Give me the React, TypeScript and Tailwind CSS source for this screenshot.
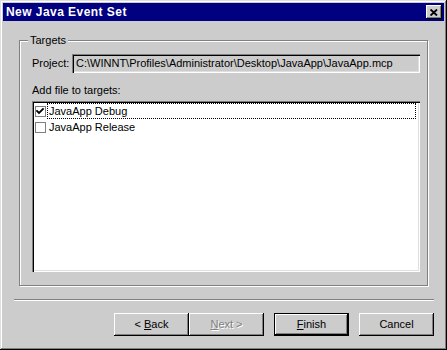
import React from "react";

const raised =
  "shadow-[inset_-1px_-1px_0_#000,inset_1px_1px_0_#fff,inset_-2px_-2px_0_#808080]";

function Btn({
  children,
  className = "",
  disabled = false,
  def = false,
}: {
  children: React.ReactNode;
  className?: string;
  disabled?: boolean;
  def?: boolean;
}) {
  return (
    <div
      className={
        "w-[75px] h-[23px] flex items-center justify-center bg-[#cccccc] text-[11px] " +
        (def
          ? "border border-black shadow-[inset_-1px_-1px_0_#000,inset_1px_1px_0_#fff,inset_-2px_-2px_0_#808080] "
          : raised + " ") +
        (disabled ? "text-[#808080] [text-shadow:1px_1px_0_#fff] " : "text-black ") +
        className
      }
    >
      {children}
    </div>
  );
}

function Check({ checked }: { checked: boolean }) {
  return (
    <div className="w-[11px] h-[11px] border border-[#808080] bg-white flex items-center justify-center shrink-0">
      {checked && (
        <svg width="9" height="9" viewBox="0 0 9 9">
          <path d="M1 4 L3 6 L7 2" stroke="#000" strokeWidth="1.8" fill="none" strokeLinecap="square" />
        </svg>
      )}
    </div>
  );
}

export default function App() {
  return (
    <div
      className="w-[447px] h-[350px] bg-[#cccccc] p-[3px] flex flex-col shadow-[inset_-1px_-1px_0_#000,inset_1px_1px_0_#dfdfdf,inset_-2px_-2px_0_#808080,inset_2px_2px_0_#fff] text-black"
      style={{ fontFamily: '"Liberation Sans", Arial, sans-serif' }}
    >
      {/* Title bar */}
      <div className="h-[18px] bg-[#000080] flex items-center justify-between pl-[3px] pr-[2px] shrink-0">
        <span className="text-white font-bold text-[12px] leading-none tracking-[0.45px]">
          New Java Event Set
        </span>
        <div className={"w-[16px] h-[14px] bg-[#cccccc] flex items-center justify-center " + raised}>
          <svg width="8" height="7" viewBox="0 0 8 7">
            <path d="M0.5 0.5 L7 6.5 M7 0.5 L0.5 6.5" stroke="#000" strokeWidth="1.9" fill="none" />
          </svg>
        </div>
      </div>

      {/* Group box */}
      <div className="relative mt-[19px] ml-[16px] w-[409px] h-[246px] border border-[#808080] shadow-[1px_1px_0_#fff,inset_1px_1px_0_#fff] pl-[12px] pr-[7px] pt-[13px] flex flex-col">
        <span className="absolute top-[-8px] left-[8px] px-[2px] bg-[#cccccc] text-[11px] leading-[14px]">
          Targets
        </span>
        <div className="flex items-center h-[19px]">
          <span className="w-[40px] text-[11px] leading-none">Project:</span>
          <div className="flex-1 h-[19px] bg-[#cccccc] shadow-[inset_1px_1px_0_#808080,inset_2px_2px_0_#000,inset_-1px_-1px_0_#fff,inset_-2px_-2px_0_#dfdfdf] flex items-center pl-[4px] text-[11px] leading-none whitespace-nowrap overflow-hidden">
            C:\WINNT\Profiles\Administrator\Desktop\JavaApp\JavaApp.mcp
          </div>
        </div>
        <div className="mt-[11px] text-[11px] leading-[13px]">Add file to targets:</div>
        <div className="mt-[4px] h-[171px] bg-white p-[2px] shadow-[inset_1px_1px_0_#808080,inset_2px_2px_0_#000,inset_-1px_-1px_0_#fff,inset_-2px_-2px_0_#dfdfdf] flex flex-col">
          <div className="h-[16px] flex items-center pl-[1px] pr-[2px]">
            <Check checked />
            <div className="ml-[1px] flex-1 h-[16px] border border-dotted border-black flex items-center pl-[1px] text-[11px] leading-none">
              JavaApp Debug
            </div>
          </div>
          <div className="h-[16px] flex items-center pl-[1px] pr-[2px]">
            <Check checked={false} />
            <div className="ml-[1px] flex-1 h-[16px] flex items-center pl-[2px] text-[11px] leading-none">
              JavaApp Release
            </div>
          </div>
        </div>
      </div>

      {/* Separator */}
      <div className="mt-[13px] ml-[11px] mr-[10px] h-[2px] border-t border-[#808080] border-b border-b-white shrink-0" />

      {/* Buttons */}
      <div className="mt-[12px] flex justify-end pr-[10px]">
        <Btn>
          &lt; <span className="underline ml-[3px]">B</span>ack
        </Btn>
        <Btn disabled>
          <span className="underline">N</span>ext &gt;
        </Btn>
        <Btn def className="ml-[10px]">
          <span className="underline">F</span>inish
        </Btn>
        <Btn className="ml-[10px]">Cancel</Btn>
      </div>
    </div>
  );
}
